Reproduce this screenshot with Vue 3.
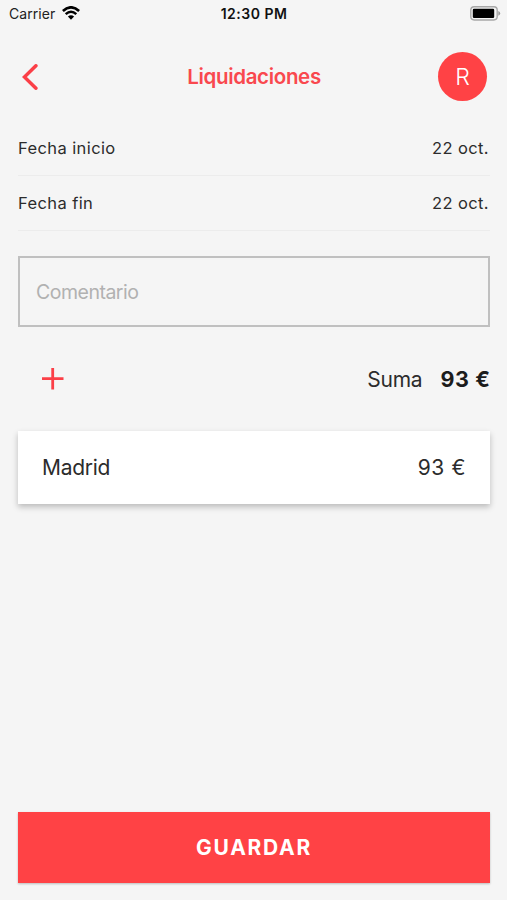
<script setup>
import { ref } from 'vue'

const dates = [
  { label: 'Fecha inicio', value: '22 oct.' },
  { label: 'Fecha fin', value: '22 oct.' },
]
const expenses = [{ place: 'Madrid', amount: '93 €' }]
const comment = ref('')
</script>

<template>
  <div class="screen">
    <div class="status">
      <div class="carrier">
        <span class="carrier-name">Carrier</span>
        <svg class="wifi" width="18" height="14" viewBox="0 0 18 14">
          <path d="M0.9 5 Q9 -2.4 17.1 5" fill="none" stroke="#000" stroke-width="2.6" />
          <path d="M3.7 8.1 Q9 3.3 14.3 8.1" fill="none" stroke="#000" stroke-width="2.5" />
          <path d="M5.9 10.5 Q9 7.8 12.1 10.5 L9 13.7 Z" fill="#000" />
        </svg>
      </div>
      <span class="time">12:30 PM</span>
      <svg class="battery" width="31" height="15" viewBox="0 0 31 15">
        <rect x="0.8" y="0.8" width="26.4" height="13.2" rx="3.4" fill="#f5f5f5" stroke="#a8a8a8" stroke-width="1.4" />
        <rect x="2.8" y="2.8" width="21.4" height="9.2" rx="1.2" fill="#000" />
        <path d="M28.3 5 Q30.2 6 30.2 7.4 Q30.2 8.8 28.3 9.8 Z" fill="#999" />
      </svg>
    </div>

    <header class="header">
      <svg class="back" width="16" height="26" viewBox="0 0 16 26">
        <path d="M13.9 1.8 L2.4 13 L13.9 24.2" fill="none" stroke="#fb3f47" stroke-width="3.5" stroke-linecap="round" stroke-linejoin="miter" />
      </svg>
      <h1 class="title">Liquidaciones</h1>
      <div class="avatar">R</div>
    </header>

    <div v-for="d in dates" :key="d.label" class="date-row">
      <span>{{ d.label }}</span>
      <span class="date-value">{{ d.value }}</span>
    </div>

    <input v-model="comment" class="comment" placeholder="Comentario" />

    <div class="summary">
      <svg class="plus" width="22" height="22" viewBox="0 0 22 22">
        <path d="M10.7 0 V21.5 M0 10.6 H21.5" stroke="#fb3f47" stroke-width="2.8" />
      </svg>
      <span class="sum-label">Suma</span>
      <strong class="sum-value">93 €</strong>
    </div>

    <div v-for="e in expenses" :key="e.place" class="card">
      <span class="place">{{ e.place }}</span>
      <span class="amount">{{ e.amount }}</span>
    </div>

    <button class="save">GUARDAR</button>
  </div>
</template>

<style>
body {
  margin: 0;
  background: #f5f5f5;
}
</style>

<style scoped>
.screen {
  box-sizing: border-box;
  height: 900px;
  padding: 0 17px 17px 18px;
  display: flex;
  flex-direction: column;
  overflow: hidden;
  background: #f5f5f5;
  color: #2c2c2c;
  font-family: Inter, "Liberation Sans", sans-serif;
}
.status {
  display: grid;
  grid-template-columns: 1fr auto 1fr;
  align-items: center;
  height: 27px;
  margin: 0 -9px 0 -9px;
  flex: none;
}
.carrier {
  display: flex;
  align-items: center;
  gap: 7px;
}
.carrier-name {
  font-size: 14px;
  letter-spacing: 0.05px;
  color: #222;
}
.wifi {
  margin-top: -1px;
}
.time {
  font-size: 14px;
  font-weight: 600;
  letter-spacing: 0.5px;
  color: #111;
}
.battery {
  justify-self: end;
  margin: -1px -2px 0 0;
}
.header {
  display: grid;
  grid-template-columns: 1fr auto 1fr;
  align-items: center;
  height: 97px;
  margin: 1px 0 -4px;
  flex: none;
}
.back {
  margin-left: 4px;
}
.title {
  margin: 0;
  font-size: 20.5px;
  font-weight: 600;
  letter-spacing: -0.33px;
  color: #f9484e;
}
.avatar {
  justify-self: end;
  width: 49px;
  height: 49px;
  margin-right: 3px;
  border-radius: 50%;
  background: #ff4245;
  color: #fff;
  font-size: 23px;
  font-weight: 350;
  line-height: 50px;
  text-align: center;
}
.date-row {
  box-sizing: border-box;
  display: flex;
  align-items: center;
  justify-content: space-between;
  height: 55px;
  border-bottom: 1px solid #ececec;
  font-size: 16.5px;
  letter-spacing: 0.4px;
  flex: none;
}
.date-value {
  margin-right: 1px;
}
.comment {
  box-sizing: border-box;
  width: 472px;
  height: 71px;
  margin: 25px 0 0;
  padding: 0 16px;
  border: 2px solid #c0c0c0;
  border-radius: 0;
  background: transparent;
  font-family: inherit;
  font-size: 19.5px;
  letter-spacing: -0.5px;
  flex: none;
}
.comment::placeholder {
  color: #b1b1b1;
  opacity: 1;
}
.summary {
  display: flex;
  align-items: center;
  height: 104px;
  flex: none;
}
.plus {
  margin: 0 auto 0 24px;
}
.sum-label {
  margin-right: 18px;
  font-size: 21px;
  letter-spacing: -0.2px;
}
.sum-value {
  margin-right: -0.5px;
  font-size: 21.5px;
  font-weight: 700;
  letter-spacing: 0.6px;
  color: #1c1c1c;
}
.card {
  box-sizing: border-box;
  display: flex;
  align-items: center;
  justify-content: space-between;
  height: 73px;
  padding: 0 24px;
  background: #fff;
  box-shadow: 0 3px 6px rgba(0, 0, 0, 0.24);
  font-size: 21px;
  flex: none;
}
.place {
  letter-spacing: -0.3px;
}
.amount {
  letter-spacing: 0.6px;
}
.save {
  width: 472px;
  height: 71px;
  margin-top: auto;
  padding: 0;
  border: 0;
  background: #ff4245;
  box-shadow: 0 1px 2px rgba(0, 0, 0, 0.24);
  color: #fff;
  font-family: inherit;
  font-size: 21px;
  font-weight: 650;
  letter-spacing: 1.7px;
  flex: none;
}
</style>
